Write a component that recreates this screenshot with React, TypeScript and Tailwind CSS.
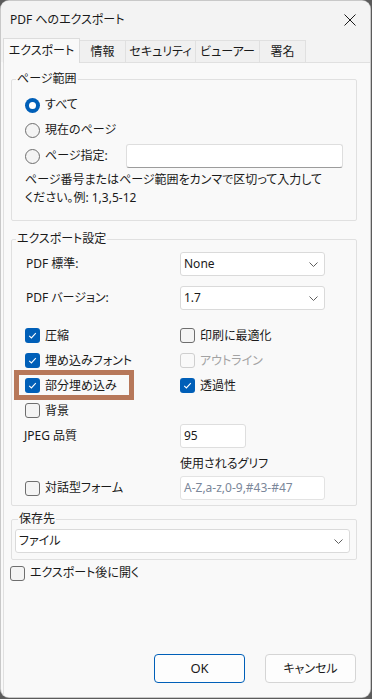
import React from "react";

const Check = ({ checked, disabled }: { checked?: boolean; disabled?: boolean }) => {
  if (checked) {
    return (
      <span className="w-[15px] h-[15px] shrink-0 rounded-[3px] bg-[#005fb8] flex items-center justify-center">
        <svg width="11" height="11" viewBox="0 0 11 11">
          <path d="M2.2 5.8 L4.4 7.9 L8.8 3.2" fill="none" stroke="#ffffff" strokeWidth="1.1" />
        </svg>
      </span>
    );
  }
  return (
    <span
      className={`w-[15px] h-[15px] shrink-0 rounded-[3px] border ${
        disabled ? "border-[#cfcfcf] bg-[#f9f9f9]" : "border-[#6e6e6e] bg-[#f4f4f4]"
      }`}
    />
  );
};

const Radio = ({ checked }: { checked?: boolean }) =>
  checked ? (
    <span className="w-[15px] h-[15px] shrink-0 rounded-full bg-[#005fb8] flex items-center justify-center">
      <span className="w-[7px] h-[7px] rounded-full bg-white" />
    </span>
  ) : (
    <span className="w-[15px] h-[15px] shrink-0 rounded-full border border-[#6e6e6e] bg-[#f4f4f4]" />
  );

const CheckRow = ({
  label,
  checked,
  disabled,
}: {
  label: string;
  checked?: boolean;
  disabled?: boolean;
}) => (
  <div className="flex items-center gap-[5px]">
    <Check checked={checked} disabled={disabled} />
    <span className={disabled ? "text-[#a3a3a3]" : ""}>{label}</span>
  </div>
);

const Chevron = () => (
  <svg width="9" height="5" viewBox="0 0 9 5">
    <path d="M0.5 0.5 L4.5 4.5 L8.5 0.5" fill="none" stroke="#5f5f5f" strokeWidth="1" />
  </svg>
);

const Select = ({ value, className }: { value: string; className?: string }) => (
  <div
    className={`h-[24px] flex items-center justify-between bg-white border border-[#dadada] rounded-[3px] pl-[3px] pr-[6px] ${className}`}
  >
    <span>{value}</span>
    <Chevron />
  </div>
);

const Group = ({
  title,
  legendClass,
  className,
  children,
}: {
  title: string;
  legendClass?: string;
  className?: string;
  children: React.ReactNode;
}) => (
  <fieldset className={`ml-[7px] w-[346px] border border-[#e0e0e0] rounded-[2px] ${className}`}>
    <legend className={`px-[1px] leading-[18px] ${legendClass ?? "ml-[4px]"}`}>{title}</legend>
    {children}
  </fieldset>
);

export default function App() {
  return (
    <div className="w-[372px] h-[699px] bg-[#5b5b5b] pt-[1px] pl-[1px] overflow-hidden font-['Noto_Sans','Noto_Sans_CJK_JP',sans-serif] [font-feature-settings:'palt'] text-[12px] text-[#1a1a1a]">
      <div className="w-[369px] h-[696px] rounded-[8px] bg-[#f9f9f9] shadow-[0_0_0_1px_#c8c8c8] overflow-hidden flex flex-col">
        {/* title bar */}
        <div className="h-[37px] shrink-0 bg-[#f3f3f3] flex items-center justify-between pl-[9px] pr-[14px]">
          <span className="leading-none mt-[1px]">PDF へのエクスポート</span>
          <svg width="12" height="12" viewBox="0 0 12 12">
            <path d="M0.5 0.5 L11.5 11.5 M11.5 0.5 L0.5 11.5" stroke="#1a1a1a" strokeWidth="1" />
          </svg>
        </div>

        {/* tabs */}
        <div className="h-[24px] shrink-0 bg-[#f3f3f3] flex items-end pl-[2px] relative z-10">
          <div className="w-[77px] h-[25px] -mb-[1px] border border-b-0 border-[#dcdcdc] bg-[#f9f9f9] flex items-center justify-center">
            エクスポート
          </div>
          {[
            ["情報", "w-[46px]"],
            ["セキュリティ", "w-[70px]"],
            ["ビューアー", "w-[64px]"],
            ["署名", "w-[46px]"],
          ].map(([t, w]) => (
            <div
              key={t}
              className={`${w} h-[22px] border-t border-r border-[#e0e0e0] bg-[#f0f0f0] flex items-center justify-center pt-[1px]`}
            >
              {t}
            </div>
          ))}
        </div>

        {/* tab page */}
        <div className="flex-1 flex flex-col ml-[2px] border-l border-t border-[#e0e0e0] bg-[#f9f9f9]">
          <Group title="ページ範囲" className="mt-[7px]">
            <div className="pl-[13px] pb-[13px]">
              <div className="h-[24px] mt-[5px] flex items-center gap-[5px]">
                <Radio checked />
                <span>すべて</span>
              </div>
              <div className="h-[24px] mt-[1px] flex items-center gap-[5px]">
                <Radio />
                <span>現在のページ</span>
              </div>
              <div className="h-[24px] mt-[2px] flex items-center">
                <Radio />
                <span className="ml-[5px] w-[81px]">ページ指定:</span>
                <div className="w-[217px] h-[24px] bg-white border border-[#dedede] border-b-[#9c9c9c] rounded-[3px]" />
              </div>
              <div className="mt-[3px] leading-[18px] whitespace-nowrap">
                <div>ページ番号またはページ範囲をカンマで区切って入力して</div>
                <div>ください。例: 1,3,5-12</div>
              </div>
            </div>
          </Group>

          <Group title="エクスポート設定" className="mt-[9px]">
            <div className="pb-[5px]">
              <div className="mt-[4px] h-[24px] flex items-center">
                <span className="w-[168px] pl-[14px]">PDF 標準:</span>
                <Select value="None" className="w-[145px]" />
              </div>
              <div className="mt-[10px] h-[24px] flex items-center">
                <span className="w-[168px] pl-[14px]">PDF バージョン:</span>
                <Select value="1.7" className="w-[145px]" />
              </div>

              <div className="mt-[13px]">
                <div className="h-[25px] flex items-center">
                  <div className="w-[168px] pl-[13px]">
                    <CheckRow label="圧縮" checked />
                  </div>
                  <CheckRow label="印刷に最適化" />
                </div>
                <div className="h-[25px] flex items-center">
                  <div className="w-[168px] pl-[13px]">
                    <CheckRow label="埋め込みフォント" checked />
                  </div>
                  <CheckRow label="アウトライン" disabled />
                </div>
                <div className="h-[25px] flex items-center relative">
                  <div className="w-[168px] pl-[13px]">
                    <CheckRow label="部分埋め込み" checked />
                  </div>
                  <CheckRow label="透過性" checked />
                  <div className="absolute left-[2px] top-[-3px] w-[120px] h-[30px] border-[5px] border-[#b7785a]" />
                </div>
                <div className="h-[25px] flex items-center">
                  <div className="w-[168px] pl-[13px]">
                    <CheckRow label="背景" />
                  </div>
                </div>
              </div>

              <div className="mt-[1px] h-[24px] flex items-center">
                <span className="w-[168px] pl-[12px]">JPEG 品質</span>
                <div className="w-[66px] h-[24px] bg-white border border-[#dedede] rounded-[3px] flex items-center pl-[3px]">
                  95
                </div>
              </div>
              <div className="mt-[7px] leading-[18px] pl-[168px]">使用されるグリフ</div>
              <div className="mt-[3px] h-[24px] flex items-center">
                <div className="w-[168px] pl-[13px]">
                  <CheckRow label="対話型フォーム" />
                </div>
                <div className="w-[145px] h-[24px] bg-white border border-[#e3e3e3] rounded-[3px] flex items-center pl-[3px] text-[#7b879a]">
                  A-Z,a-z,0-9,#43-#47
                </div>
              </div>
            </div>
          </Group>

          <Group title="保存先" legendClass="ml-[6px]" className="mt-[4px]">
            <div className="pl-[3px] pb-[6px] mt-[1px]">
              <Select value="ファイル" className="w-[335px] h-[23px]" />
            </div>
          </Group>

          <div className="mt-[3px] ml-[6px] h-[20px] flex items-center gap-[5px]">
            <Check />
            <span>エクスポート後に開く</span>
          </div>

          <div className="mt-auto flex justify-end gap-[20px] pr-[14px] pb-[14px]">
            <button className="w-[91px] h-[29px] bg-[#fdfdfd] border border-[#005fb8] rounded-[4px] text-[13px]">
              OK
            </button>
            <button className="w-[91px] h-[29px] bg-[#fdfdfd] border border-[#d5d5d5] rounded-[4px]">
              キャンセル
            </button>
          </div>
        </div>
      </div>
    </div>
  );
}
